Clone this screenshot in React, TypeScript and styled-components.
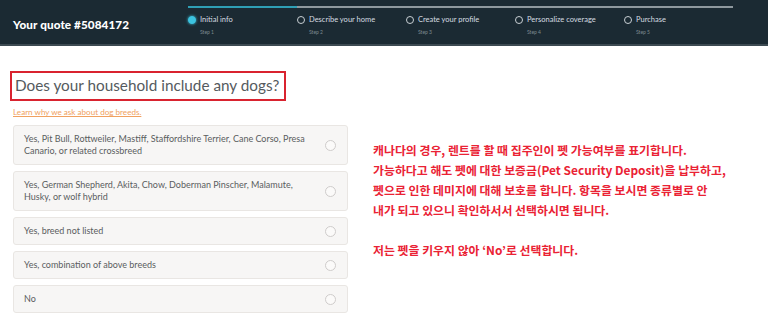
import React from 'react';
import styled, { createGlobalStyle } from 'styled-components';

const GlobalStyle = createGlobalStyle`
  html, body { margin: 0; padding: 0; background: #ffffff; }
  body { font-family: Lato, "Open Sans", sans-serif; width: 768px; height: 331px; overflow: hidden; }
`;

const steps = ['Initial info', 'Describe your home', 'Create your profile', 'Personalize coverage', 'Purchase'];

const options = [
  'Yes, Pit Bull, Rottweiler, Mastiff, Staffordshire Terrier, Cane Corso, Presa Canario, or related crossbreed',
  'Yes, German Shepherd, Akita, Chow, Doberman Pinscher, Malamute, Husky, or wolf hybrid',
  'Yes, breed not listed',
  'Yes, combination of above breeds',
  'No',
];

const App = () => {
  return (
    <>
      <GlobalStyle />
      <Header>
        <QuoteTitle>Your quote #5084172</QuoteTitle>
        <Progress>
          <Track>
            <TrackFill />
          </Track>
          <Steps>
            {steps.map((label, i) => (
              <Step key={label}>
                <Radio active={i === 0} />
                <StepText>
                  <StepLabel>{label}</StepLabel>
                  <StepNumber>Step {i + 1}</StepNumber>
                </StepText>
              </Step>
            ))}
          </Steps>
        </Progress>
      </Header>
      <Main>
        <Question>
          <Heading>Does your household include any dogs?</Heading>
          <LearnLink href="#">Learn why we ask about dog breeds.</LearnLink>
          <Options>
            {options.map((o) => (
              <Option key={o} tall={o.length > 60}>
                <span>{o}</span>
                <OptionRadio />
              </Option>
            ))}
          </Options>
        </Question>
        <Note>
          <p>
            캐나다의 경우, 렌트를 할 때 집주인이 펫 가능여부를 표기합니다.
            <br />
            가능하다고 해도 펫에 대한 보증금(Pet Security Deposit)을 납부하고,
            <br />
            펫으로 인한 데미지에 대해 보호를 합니다. 항목을 보시면 종류별로 안
            <br />
            내가 되고 있으니 확인하서서 선택하시면 됩니다.
          </p>
          <p>저는 펫을 키우지 않아 ‘No’로 선택합니다.</p>
        </Note>
      </Main>
    </>
  );
};

const Header = styled.header`
  height: 44px;
  background: #1b2a33;
  border-bottom: 2px solid #3c4a52;
  display: flex;
  align-items: stretch;
`;

const QuoteTitle = styled.h1`
  margin: 0;
  width: 188px;
  padding: 17px 0 0 13px;
  box-sizing: border-box;
  font-size: 11.7px;
  font-weight: 900;
  color: #ffffff;
  letter-spacing: 0.1px;
`;

const Progress = styled.div`
  width: 545px;
  padding-top: 6px;
`;

const Track = styled.div`
  height: 2px;
  background: #8e989e;
`;

const TrackFill = styled.div`
  width: 109px;
  height: 2px;
  background: #2f9fb5;
`;

const Steps = styled.div`
  display: flex;
  padding-top: 7px;
`;

const Step = styled.div`
  width: 109px;
  display: flex;
  gap: 4px;
`;

const Radio = styled.span<{ active?: boolean }>`
  width: 8px;
  height: 8px;
  margin-top: 1px;
  border-radius: 50%;
  box-sizing: border-box;
  border: 1px solid ${(p) => (p.active ? '#3cc3e0' : '#c9d0d4')};
  background: ${(p) => (p.active ? '#3cc3e0' : 'transparent')};
  box-shadow: ${(p) => (p.active ? '0 0 3px #3cc3e0' : 'none')};
`;

const StepText = styled.div`
  display: flex;
  flex-direction: column;
`;

const StepLabel = styled.span`
  font-size: 7.5px;
  color: #d6dde1;
  line-height: 9px;
`;

const StepNumber = styled.span`
  font-size: 5px;
  color: #7e8a91;
  margin-top: 5px;
`;

const Main = styled.main`
  display: flex;
  padding: 25px 0 0 10px;
`;

const Question = styled.section`
  width: 338px;
  display: flex;
  flex-direction: column;
`;

const Heading = styled.h2`
  margin: 0;
  width: 276px;
  height: 30px;
  box-sizing: border-box;
  border: 2px solid #d9232f;
  padding: 3px 0 0 3px;
  font-size: 15.3px;
  font-weight: 400;
  color: #555a5e;
  white-space: nowrap;
`;

const LearnLink = styled.a`
  margin: 6px 0 0 3px;
  font-size: 8.1px;
  color: #f0a160;
  text-decoration: underline;
`;

const Options = styled.div`
  display: flex;
  flex-direction: column;
  gap: 6px;
  margin: 8px 0 0 3px;
`;

const Option = styled.div<{ tall?: boolean }>`
  height: ${(p) => (p.tall ? 40 : 28)}px;
  box-sizing: border-box;
  padding: 0 11px 0 10px;
  background: #f7f6f5;
  border: 1px solid #e9e6e3;
  border-radius: 3px;
  display: flex;
  align-items: center;
  justify-content: space-between;
  gap: 18px;
  font-size: 9px;
  line-height: 12px;
  color: #5a5d60;
`;

const OptionRadio = styled.span`
  flex: none;
  width: 9px;
  height: 9px;
  border-radius: 50%;
  border: 1px solid #cfcccb;
  background: #fbfaf9;
`;

const Note = styled.aside`
  margin: 69px 0 0 25px;
  font-family: "Noto Sans CJK KR", "Noto Sans", sans-serif;
  font-size: 11.9px;
  font-weight: 700;
  line-height: 20px;
  color: #ea2234;
  p { margin: 0 0 20px; white-space: nowrap; }
`;

export default App;
